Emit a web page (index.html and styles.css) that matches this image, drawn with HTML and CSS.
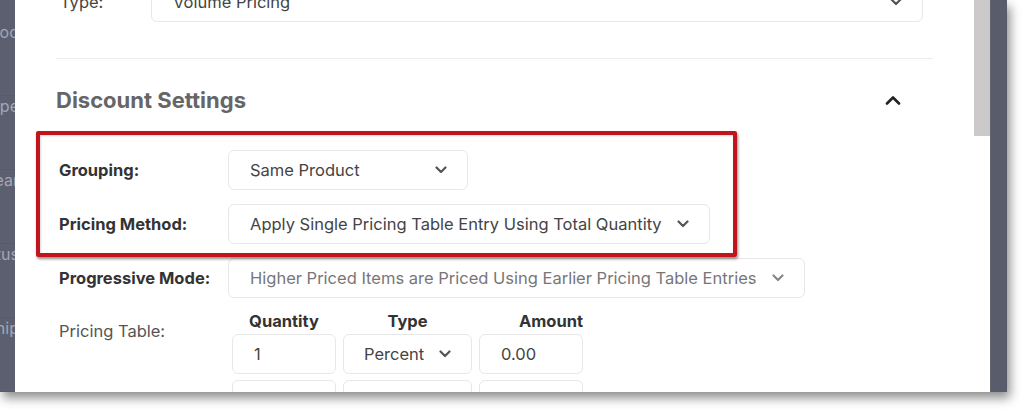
FILE: index.html
```html
<!DOCTYPE html>
<html lang="en">
<head>
<meta charset="utf-8">
<title>Discount Settings</title>
<link rel="stylesheet" href="styles.css">
</head>
<body>
<div class="screen">
  <aside class="backdrop-left">
    <div class="bg-row"><span>Prod</span></div>
    <div class="bg-row"><span>Type</span></div>
    <div class="bg-row"><span>Clear</span></div>
    <div class="bg-row"><span>Status</span></div>
    <div class="bg-row"><span>Ship</span></div>
  </aside>

  <div class="modal">
    <div class="modal-scroll">
      <div class="modal-content">
        <div class="type-row">
          <span class="type-label">Type:</span>
          <div class="select select-wide">
            <span>Volume Pricing</span>
            <svg class="chev" viewBox="0 0 12 8"><path d="M1.5 1.5 6 6l4.5-4.5"/></svg>
          </div>
        </div>

        <div class="divider"></div>

        <div class="section-head">
          <h2>Discount Settings</h2>
          <svg class="chev-up" viewBox="0 0 16 10"><path d="M2 8.5 8 2.5l6 6"/></svg>
        </div>

        <div class="form">
          <div class="form-row">
            <span class="label strong">Grouping:</span>
            <div class="select w-grouping">
              <span>Same Product</span>
              <svg class="chev" viewBox="0 0 12 8"><path d="M1.5 1.5 6 6l4.5-4.5"/></svg>
            </div>
          </div>
          <div class="form-row">
            <span class="label strong">Pricing Method:</span>
            <div class="select">
              <span>Apply Single Pricing Table Entry Using Total Quantity</span>
              <svg class="chev" viewBox="0 0 12 8"><path d="M1.5 1.5 6 6l4.5-4.5"/></svg>
            </div>
          </div>
          <div class="form-row">
            <span class="label strong">Progressive Mode:</span>
            <div class="select disabled">
              <span>Higher Priced Items are Priced Using Earlier Pricing Table Entries</span>
              <svg class="chev" viewBox="0 0 12 8"><path d="M1.5 1.5 6 6l4.5-4.5"/></svg>
            </div>
          </div>
          <div class="form-row table-row">
            <span class="label plain">Pricing Table:</span>
            <div class="pricing-table">
              <div class="pt-head">
                <span class="c-qty">Quantity</span>
                <span class="c-type">Type</span>
                <span class="c-amt">Amount</span>
              </div>
              <div class="pt-row">
                <div class="input c-qty">1</div>
                <div class="select c-type">
                  <span>Percent</span>
                  <svg class="chev" viewBox="0 0 12 8"><path d="M1.5 1.5 6 6l4.5-4.5"/></svg>
                </div>
                <div class="input c-amt">0.00</div>
              </div>
              <div class="pt-row">
                <div class="input c-qty"></div>
                <div class="select c-type"></div>
                <div class="input c-amt"></div>
              </div>
            </div>
          </div>
        </div>
      </div>
    </div>
    <div class="scrollbar"><div class="thumb"></div></div>
  </div>

  <div class="backdrop-right"></div>

  <div class="highlight"></div>
</div>
</body>
</html>
```

FILE: styles.css
```css
* { box-sizing: border-box; }

html, body {
  margin: 0;
  padding: 0;
  background: #ffffff;
}

body {
  font-family: Inter, "Noto Sans", "Liberation Sans", sans-serif;
  color: #333;
  width: 1024px;
  height: 416px;
  overflow: hidden;
}

.screen {
  position: relative;
  width: 1007px;
  height: 392px;
  display: flex;
  box-shadow: 3px 6px 10px rgba(0, 0, 0, 0.45);
}

/* dimmed page behind the modal */
.backdrop-left {
  width: 15px;
  flex: none;
  background: #5b5f70;
  overflow: hidden;
  padding-top: 22px;
  display: flex;
  flex-direction: column;
}

.bg-row {
  height: 74px;
  flex: none;
  display: flex;
  justify-content: flex-end;
  border-bottom: 1px solid #565a6a;
  font-size: 16px;
  color: #a3a7b3;
  line-height: 20px;
}

.bg-row span {
  margin-right: -4px;
  white-space: nowrap;
}

.backdrop-right {
  width: 17px;
  flex: none;
  background: #585c6b;
  border-left: 1px solid #60646f;
}

/* modal */
.modal {
  flex: 1;
  display: flex;
  background: #fff;
  overflow: hidden;
}

.modal-scroll {
  flex: 1;
  overflow: hidden;
}

.scrollbar {
  width: 16px;
  flex: none;
  background: #fff;
}

.thumb {
  height: 136px;
  background: #cbc9c9;
}

.modal-content {
  margin-top: -18px;
  padding: 0 41px;
}

.type-row {
  display: flex;
  align-items: center;
  height: 40px;
}

.type-label {
  width: 95px;
  padding-left: 4px;
  font-size: 16.5px;
  color: #444;
}

.select-wide {
  flex: none;
  width: 772px;
}

.divider {
  margin-top: 36px;
  height: 1px;
  background: #ececec;
}

.section-head {
  display: flex;
  align-items: center;
  justify-content: space-between;
  margin-top: 27px;
  padding-right: 32px;
  height: 28px;
}

.section-head h2 {
  margin: 0;
  font-size: 22px;
  font-weight: 700;
  color: #666;
  line-height: 28px;
}

.chev-up {
  width: 16px;
  height: 10px;
  fill: none;
  stroke: #222;
  stroke-width: 2.6;
  stroke-linecap: round;
  stroke-linejoin: round;
}

/* form */
.form {
  margin-top: 36px;
  display: flex;
  flex-direction: column;
  gap: 14px;
}

.form-row {
  display: flex;
  align-items: center;
  height: 40px;
}

.label {
  width: 172px;
  flex: none;
  padding-left: 3px;
  font-size: 16.5px;
}

.label.strong {
  font-weight: 700;
  color: #333;
}

.label.plain {
  font-weight: 400;
  color: #555;
}

.select,
.input {
  height: 40px;
  border: 1px solid #e7e7e7;
  border-radius: 6px;
  display: flex;
  align-items: center;
  padding: 0 20px 0 21px;
  font-size: 16.5px;
  color: #444;
  background: #fff;
}

.select {
  gap: 15px;
  justify-content: space-between;
}

.w-grouping {
  width: 240px;
}

.select.disabled {
  color: #777;
  width: 577px;
}

.chev {
  width: 12px;
  height: 8px;
  flex: none;
  fill: none;
  stroke: #555;
  stroke-width: 2.2;
  stroke-linecap: round;
  stroke-linejoin: round;
}

.select.disabled .chev {
  stroke: #888;
}

/* pricing table */
.table-row {
  height: auto;
  align-items: flex-start;
}

.table-row .label {
  padding-top: 9px;
  line-height: 20px;
}

.pricing-table {
  margin-left: 4px;
  display: flex;
  flex-direction: column;
  gap: 6px;
}

.pt-head {
  display: flex;
  gap: 7px;
  font-size: 16.5px;
  font-weight: 700;
  color: #333;
  line-height: 20px;
  margin-top: -1px;
  margin-bottom: -3px;
}

.pt-row {
  display: flex;
  gap: 7px;
}

.c-qty { width: 104px; flex: none; }
.c-type { width: 129px; flex: none; }
.c-amt { width: 104px; flex: none; }

.pt-head .c-qty,
.pt-head .c-type { text-align: center; }
.pt-head .c-amt { text-align: right; padding-right: 0; }

.pricing-table .select { padding: 0 20px 0 20px; gap: 10px; }

/* annotation */
.highlight {
  position: absolute;
  left: 36px;
  top: 131px;
  width: 701px;
  height: 126px;
  border: 4px solid #c2141b;
  border-radius: 2px;
  box-shadow: 1px 2px 3px rgba(0, 0, 0, 0.45), inset 1px 1px 2px rgba(0, 0, 0, 0.15);
  pointer-events: none;
}
```
